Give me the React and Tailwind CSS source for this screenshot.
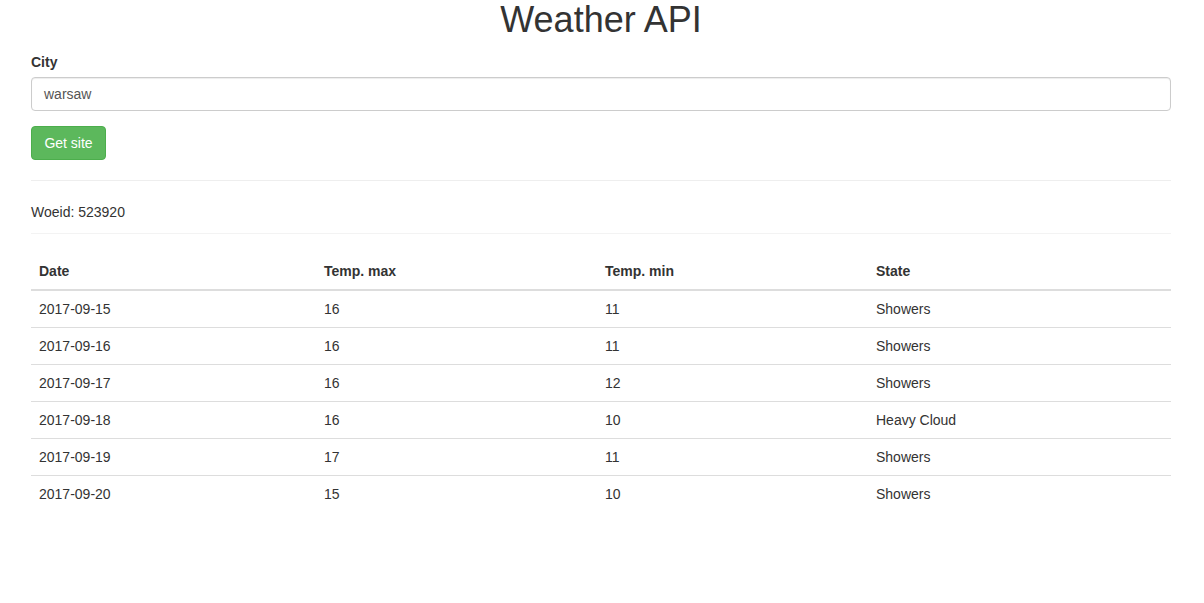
import React from "react";

const rows = [
  ["2017-09-15", "16", "11", "Showers"],
  ["2017-09-16", "16", "11", "Showers"],
  ["2017-09-17", "16", "12", "Showers"],
  ["2017-09-18", "16", "10", "Heavy Cloud"],
  ["2017-09-19", "17", "11", "Showers"],
  ["2017-09-20", "15", "10", "Showers"],
];

export default function App() {
  return (
    <div
      className="min-h-[603px] bg-white text-[14px] leading-5 text-[#333]"
      style={{ fontFamily: '"Liberation Sans", Arial, sans-serif' }}
    >
      <div className="mx-auto w-[1142px] pr-[2px]">
        <h1 className="mb-[12px] text-center text-[36px] leading-[1.1] font-normal">Weather API</h1>
        <div>
          <label className="mb-[5px] block font-bold">City</label>
          <div className="h-[34px] w-full rounded-[4px] border border-[#ccc] px-3 py-[6px] text-[#555] shadow-[inset_0_1px_1px_rgba(0,0,0,0.075)]">
            warsaw
          </div>
        </div>
        <button className="mt-[15px] h-[34px] w-[75px] rounded-[4px] border border-[#4cae4c] bg-[#5cb85c] text-center text-white">
          Get site
        </button>
        <div className="mt-5 border-t border-[#eee]" />
        <p className="mt-[21px]">Woeid: 523920</p>
        <div className="mt-[11px] border-t border-[#f3f3f3]" />
        <table className="mt-[19px] w-full border-collapse text-left">
          <colgroup>
            <col className="w-[285px]" />
            <col className="w-[281px]" />
            <col className="w-[271px]" />
            <col className="w-[303px]" />
          </colgroup>
          <thead>
            <tr className="border-b-2 border-[#ddd]">
              <th className="p-2 font-bold">Date</th>
              <th className="p-2 font-bold">Temp. max</th>
              <th className="p-2 font-bold">Temp. min</th>
              <th className="p-2 font-bold">State</th>
            </tr>
          </thead>
          <tbody>
            {rows.map((r, i) => (
              <tr key={i} className={i === 0 ? "" : "border-t border-[#ddd]"}>
                {r.map((c, j) => (
                  <td key={j} className="p-2">
                    {c}
                  </td>
                ))}
              </tr>
            ))}
          </tbody>
        </table>
      </div>
    </div>
  );
}
